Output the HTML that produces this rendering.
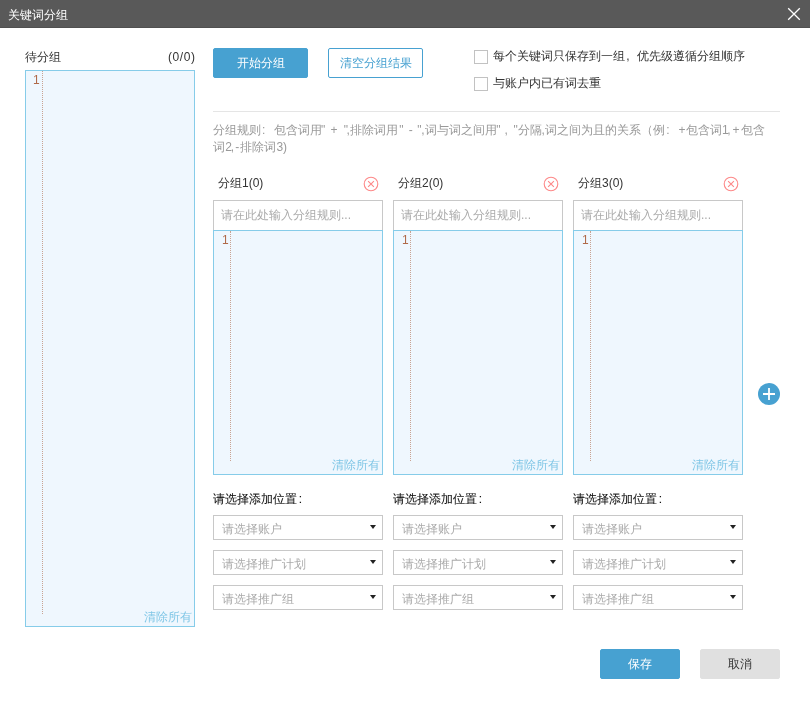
<!DOCTYPE html>
<html><head><meta charset="utf-8">
<style>
*{box-sizing:border-box;margin:0;padding:0}
html,body{width:810px;height:715px;overflow:hidden;background:#fff;font-family:"Liberation Sans",sans-serif;font-size:12px;color:#333}
#wrap{position:absolute;left:0;top:0;width:810px;height:715px;will-change:transform}
.abs{position:absolute;white-space:nowrap}
#title{left:0;top:0;width:810px;height:28px;background:#595959;border-bottom:1px solid #505050;color:#fff;font-size:12px;line-height:30px;padding-left:8px}
.lbl{font-size:12px;color:#333;line-height:14px}
.ta{background:#eff7fe;border:1px solid #86cce9}
.ln{color:#b06a48;font-size:12px;line-height:14px}
.dots{border-left:1px dotted #c9a392;width:0}
.clr{color:#7fc6e6;font-size:12px;line-height:14px}
.btn{height:30px;line-height:29px;text-align:center;font-size:12px;border-radius:2px}
.cb{width:14px;height:14px;border:1px solid #c2c2c2;background:#fff}
.rule{color:#999;font-size:12px;line-height:17px}
.sel{border:1px solid #c8c8c8;background:#fff;color:#aaa;font-size:12px;line-height:26px;padding-left:8px}
.arr{width:0;height:0;border-left:3px solid transparent;border-right:3px solid transparent;border-top:4px solid #222}
.inp{border:1px solid #c8c8c8;background:#fff;color:#aaa;font-size:12px;line-height:29px;padding-left:7px}
</style></head><body><div id="wrap">
<div id="title" class="abs">关键词分组</div>
<svg class="abs" style="left:786px;top:6px" width="16" height="16" viewBox="0 0 16 16"><path d="M2.2 2.2L13.8 13.8M13.8 2.2L2.2 13.8" stroke="#fff" stroke-width="1.3"/></svg>
<div class="abs lbl" style="left:25px;top:50px">待分组</div>
<div class="abs lbl" style="left:168px;top:49.5px;letter-spacing:0.6px">(0/0)</div>
<div class="abs ta" style="left:25px;top:70px;width:170px;height:557px"></div>
<div class="abs ln" style="left:33px;top:73px">1</div>
<div class="abs dots" style="left:42px;top:71px;height:543px"></div>
<div class="abs clr" style="left:144px;top:610px">清除所有</div>
<div class="abs btn" style="left:213px;top:48px;width:95px;background:#47a1d1;color:#fff;border:1px solid #47a1d1">开始分组</div>
<div class="abs btn" style="left:328px;top:48px;width:95px;background:#fff;color:#47a1d1;border:1px solid #47a1d1">清空分组结果</div>
<div class="abs cb" style="left:474px;top:50px"></div>
<div class="abs lbl" style="left:493px;top:49px">每个关键词只保存到一组</div>
<div class="abs lbl" style="left:626.3px;top:49px">,</div>
<div class="abs lbl" style="left:637px;top:49px">优先级遵循分组顺序</div>
<div class="abs cb" style="left:474px;top:77px"></div>
<div class="abs lbl" style="left:493px;top:76px">与账户内已有词去重</div>
<div class="abs" style="left:213px;top:111px;width:567px;height:1px;background:#e5e5e5"></div>
<div class="abs rule" style="left:213px;top:122px">分组规则</div>
<div class="abs rule" style="left:262px;top:122px">:</div>
<div class="abs rule" style="left:273.5px;top:122px">包含词用</div>
<div class="abs rule" style="left:321px;top:122px">"</div>
<div class="abs rule" style="left:330.4px;top:122px">+</div>
<div class="abs rule" style="left:343.8px;top:122px">"</div>
<div class="abs rule" style="left:346.6px;top:122px">,</div>
<div class="abs rule" style="left:350px;top:122px">排除词用</div>
<div class="abs rule" style="left:399.3px;top:122px">"</div>
<div class="abs rule" style="left:408.8px;top:122px">-</div>
<div class="abs rule" style="left:417.2px;top:122px">"</div>
<div class="abs rule" style="left:421.2px;top:122px">,</div>
<div class="abs rule" style="left:424.5px;top:122px">词与词之间用</div>
<div class="abs rule" style="left:496.3px;top:122px">"</div>
<div class="abs rule" style="left:504.5px;top:122px">,</div>
<div class="abs rule" style="left:513.4px;top:122px">"</div>
<div class="abs rule" style="left:518px;top:122px">分隔</div>
<div class="abs rule" style="left:541.6px;top:122px">,</div>
<div class="abs rule" style="left:544.5px;top:122px">词之间为且的关系</div>
<div class="abs rule" style="left:640.5px;top:122px">（例</div>
<div class="abs rule" style="left:666.2px;top:122px">:</div>
<div class="abs rule" style="left:678.4px;top:122px">+</div>
<div class="abs rule" style="left:685.5px;top:122px">包含词</div>
<div class="abs rule" style="left:722px;top:122px">1</div>
<div class="abs rule" style="left:727.3px;top:122px">,</div>
<div class="abs rule" style="left:732.6px;top:122px">+</div>
<div class="abs rule" style="left:740.5px;top:122px">包含</div>
<div class="abs rule" style="left:213px;top:139px">词</div>
<div class="abs rule" style="left:225.2px;top:139px">2</div>
<div class="abs rule" style="left:230.8px;top:139px">,</div>
<div class="abs rule" style="left:235.3px;top:139px">-</div>
<div class="abs rule" style="left:240px;top:139px">排除词</div>
<div class="abs rule" style="left:276.4px;top:139px">3</div>
<div class="abs rule" style="left:282.9px;top:139px">)</div>
<div class="abs lbl" style="left:218px;top:176px">分组1(0)</div>
<svg class="abs" style="left:363px;top:176px" width="16" height="16" viewBox="0 0 16 16"><circle cx="8" cy="8" r="6.8" fill="none" stroke="#fd8888" stroke-width="1.1"/><path d="M5.1 5.1L10.9 10.9M10.9 5.1L5.1 10.9" stroke="#fd8888" stroke-width="1.1"/></svg>
<div class="abs inp" style="left:213px;top:200px;width:170px;height:31px">请在此处输入分组规则...</div>
<div class="abs ta" style="left:213px;top:230px;width:170px;height:245px"></div>
<div class="abs ln" style="left:222px;top:233px">1</div>
<div class="abs dots" style="left:230px;top:231px;height:230px"></div>
<div class="abs clr" style="left:332px;top:458px">清除所有</div>
<div class="abs lbl" style="left:213px;top:492px;color:#111;-webkit-text-stroke:0.08px #111">请选择添加位置</div>
<div class="abs lbl" style="left:298.7px;top:492px;color:#111;-webkit-text-stroke:0.08px #111">:</div>
<div class="abs sel" style="left:213px;top:515px;width:170px;height:25px">请选择账户</div>
<div class="abs arr" style="left:370px;top:525px"></div>
<div class="abs sel" style="left:213px;top:550px;width:170px;height:25px">请选择推广计划</div>
<div class="abs arr" style="left:370px;top:560px"></div>
<div class="abs sel" style="left:213px;top:585px;width:170px;height:25px">请选择推广组</div>
<div class="abs arr" style="left:370px;top:595px"></div>
<div class="abs lbl" style="left:398px;top:176px">分组2(0)</div>
<svg class="abs" style="left:543px;top:176px" width="16" height="16" viewBox="0 0 16 16"><circle cx="8" cy="8" r="6.8" fill="none" stroke="#fd8888" stroke-width="1.1"/><path d="M5.1 5.1L10.9 10.9M10.9 5.1L5.1 10.9" stroke="#fd8888" stroke-width="1.1"/></svg>
<div class="abs inp" style="left:393px;top:200px;width:170px;height:31px">请在此处输入分组规则...</div>
<div class="abs ta" style="left:393px;top:230px;width:170px;height:245px"></div>
<div class="abs ln" style="left:402px;top:233px">1</div>
<div class="abs dots" style="left:410px;top:231px;height:230px"></div>
<div class="abs clr" style="left:512px;top:458px">清除所有</div>
<div class="abs lbl" style="left:393px;top:492px;color:#111;-webkit-text-stroke:0.08px #111">请选择添加位置</div>
<div class="abs lbl" style="left:478.7px;top:492px;color:#111;-webkit-text-stroke:0.08px #111">:</div>
<div class="abs sel" style="left:393px;top:515px;width:170px;height:25px">请选择账户</div>
<div class="abs arr" style="left:550px;top:525px"></div>
<div class="abs sel" style="left:393px;top:550px;width:170px;height:25px">请选择推广计划</div>
<div class="abs arr" style="left:550px;top:560px"></div>
<div class="abs sel" style="left:393px;top:585px;width:170px;height:25px">请选择推广组</div>
<div class="abs arr" style="left:550px;top:595px"></div>
<div class="abs lbl" style="left:578px;top:176px">分组3(0)</div>
<svg class="abs" style="left:723px;top:176px" width="16" height="16" viewBox="0 0 16 16"><circle cx="8" cy="8" r="6.8" fill="none" stroke="#fd8888" stroke-width="1.1"/><path d="M5.1 5.1L10.9 10.9M10.9 5.1L5.1 10.9" stroke="#fd8888" stroke-width="1.1"/></svg>
<div class="abs inp" style="left:573px;top:200px;width:170px;height:31px">请在此处输入分组规则...</div>
<div class="abs ta" style="left:573px;top:230px;width:170px;height:245px"></div>
<div class="abs ln" style="left:582px;top:233px">1</div>
<div class="abs dots" style="left:590px;top:231px;height:230px"></div>
<div class="abs clr" style="left:692px;top:458px">清除所有</div>
<div class="abs lbl" style="left:573px;top:492px;color:#111;-webkit-text-stroke:0.08px #111">请选择添加位置</div>
<div class="abs lbl" style="left:658.7px;top:492px;color:#111;-webkit-text-stroke:0.08px #111">:</div>
<div class="abs sel" style="left:573px;top:515px;width:170px;height:25px">请选择账户</div>
<div class="abs arr" style="left:730px;top:525px"></div>
<div class="abs sel" style="left:573px;top:550px;width:170px;height:25px">请选择推广计划</div>
<div class="abs arr" style="left:730px;top:560px"></div>
<div class="abs sel" style="left:573px;top:585px;width:170px;height:25px">请选择推广组</div>
<div class="abs arr" style="left:730px;top:595px"></div>
<svg class="abs" style="left:758px;top:383px" width="22" height="22" viewBox="0 0 22 22"><circle cx="11" cy="11" r="11" fill="#47a1d1"/><path d="M5 11H17M11 5V17" stroke="#fff" stroke-width="1.8"/></svg>
<div class="abs btn" style="left:600px;top:649px;width:80px;background:#47a1d1;color:#fff;border:1px solid #47a1d1">保存</div>
<div class="abs btn" style="left:700px;top:649px;width:80px;background:#e0e0e0;color:#333;border:1px solid #e0e0e0">取消</div>
</div></body></html>
